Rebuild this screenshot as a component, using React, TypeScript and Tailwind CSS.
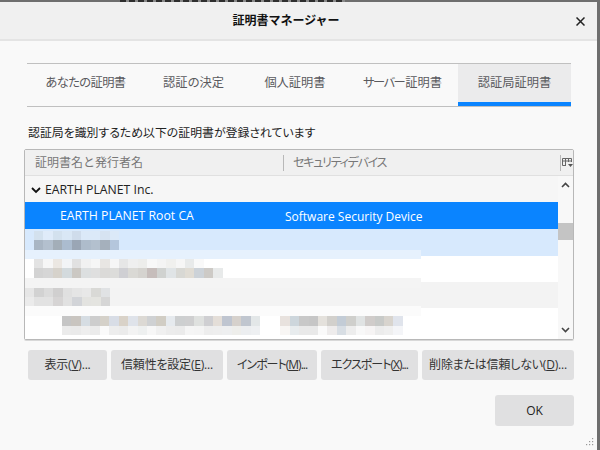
import React from "react";

const JP = "font-['Open_Sans','Noto_Sans_CJK_JP',sans-serif]";

type StripDef = { h: number; ml: number; w?: number; band?: string; cells?: string[] };

const strips: StripDef[] = [
  { h: 55, ml: 0 },
  {
    h: 9, ml: 9,
    cells: ["#d3e1ee", "#dfebf9", "#d3e1ee", "#d9e7f5", "#cfdceb", "#dbe9f8", "#dbe9f8", "#d6e3f1", "#dbe9f8"],
  },
  {
    h: 10, ml: 9,
    cells: ["#a9b6c4", "#b3c0ce", "#a3aeb8", "#abbccf", "#9aa6b5", "#aebccb", "#b3c0ce", "#a5b0bc", "#b4c6dc"],
  },
  { h: 9, ml: 0, w: 396, band: "#e6f1fd" },
  {
    h: 9, ml: 9,
    cells: ["#e3e3e3", "#f6f6f6", "#ebe7e2", "#f2f4f6", "#e1e1e1", "#f1f1f1", "#f6f6f6", "#e8e6e3", "#f6f6f6", "#e6e6e6", "#efefef", "#ededeb", "#f8f8f8", "#f4f4f4", "#f0f0ee", "#f6f6f6", "#e8eaea", "#f9f9f9"],
  },
  {
    h: 10, ml: 9,
    cells: ["#d3d3d3", "#d6d6d6", "#d6d2cb", "#d3dadd", "#cbc8c3", "#dcdfe0", "#dfdfdf", "#dbdad8", "#dcdcda", "#cfcfd3", "#dad9d5", "#d5d3cf", "#c6bdbb", "#d0d2d0", "#e0e4e6", "#d8d8d4", "#e0dcd4", "#ccd2d8", "#cdcac6", "#e8eaea"],
  },
  { h: 10, ml: 0, w: 396, band: "#f4f4f4" },
  {
    h: 9, ml: 0,
    cells: ["#e6e6e6", "#d2d2d2", "#dbdbdb", "#d0cfcf", "#e0e0e0", "#e5e5e5", "#e8e8e8", "#d9d9d6", "#e0e2e4"],
  },
  {
    h: 9, ml: 0,
    cells: ["#ebebeb", "#e2e2e2", "#e2e2e2", "#d6d4d4", "#e1e1e1", "#d2d4d8", "#e3e3e0", "#e4e4e0", "#d6d6d6"],
  },
  { h: 10, ml: 0, w: 396, band: "#fbfbfb" },
];

const lowA = ["#c5c5c5", "#c9c5c0", "#d6dde3", "#cdcdcd", "#d5d1c9", "#d8dde6", "#d9d2c8", "#dfe3ea", "#dcd9d4", "#cfd1d3", "#d1cdc4", "#e6eaee", "#cdcfd0", "#cfcfd0", "#dfe1df", "#cfcfd2", "#e4ded8", "#bfc5d0", "#d6d1cc", "#c0c6cf", "#e3e7e8"];
const lowA2 = ["#e8e2de", "#cdd6dc", "#c8c8c8", "#c6c6c6", "#e4e1dc", "#d2d0cc", "#c3ccd6", "#cfcfcc", "#e0e3e3", "#d0ccca", "#c8cac8", "#d8d4ce", "#e0e4ec"];
const lowB = ["#ebebeb", "#eaeaea", "#eeeeee", "#ebebeb", "#fafafa", "#ededed", "#ebebeb", "#f3f3f3", "#eef0f0", "#f7f7f7", "#f0f0f0", "#ececec", "#ebebeb", "#f5f5f5", "#f4f4f4", "#ededed", "#eeeeee", "#eeeff0", "#eeeeeb", "#eceef0", "#eef0f2"];
const lowB2 = ["#f8f6f4", "#e8ecee", "#e9e9e9", "#e9e9e9", "#fafafa", "#eeecec", "#d8dee4", "#ededed", "#f8f8f8", "#f6f4f4", "#ececec", "#efefef", "#f4f5f8"];

function Cells({ colors }: { colors: string[] }) {
  return (
    <>
      {colors.map((c, i) => (
        <div key={i} className="h-full w-[9.45px] shrink-0" style={{ backgroundColor: c }} />
      ))}
    </>
  );
}

function Mosaic() {
  return (
    <div className="pointer-events-none absolute inset-0 flex flex-col overflow-hidden">
      {strips.map((s, i) => (
        <div key={i} className="flex shrink-0" style={{ height: s.h, marginLeft: s.ml }}>
          {s.cells && <Cells colors={s.cells} />}
          {s.band && <div className="h-full" style={{ width: s.w, backgroundColor: s.band }} />}
        </div>
      ))}
      <div className="ml-[37px] flex h-[10px] shrink-0">
        <Cells colors={lowA} />
        <div className="w-[20px] shrink-0" />
        <Cells colors={lowA2} />
      </div>
      <div className="ml-[37px] flex h-[9px] shrink-0">
        <Cells colors={lowB} />
        <div className="w-[20px] shrink-0" />
        <Cells colors={lowB2} />
      </div>
    </div>
  );
}

function Btn({ label, k, w, kana }: { label: string; k: string; w: string; kana?: boolean }) {
  return (
    <button className={`h-[30px] ${w} shrink-0 rounded-[3px] bg-[#e0e0e1] text-[12px] text-[#333] whitespace-nowrap [font-feature-settings:'palt'] ${kana ? "tracking-[-1px]" : "tracking-[-0.2px]"}`}>
      {label}(<span className="underline">{k}</span>)...
    </button>
  );
}

function Tab({ label, rest, w, active, tight }: { label?: string; rest: string; w: string; active?: boolean; tight?: boolean }) {
  return (
    <div
      className={`flex ${w} items-center justify-center text-[12.25px] text-[#5a5a5e] [font-feature-settings:'palt'] ${
        active ? "border-b-[4px] border-[#0a84ff] bg-[#ebebec] pt-[1px]" : "pb-[3px]"
      } ${tight ? "tracking-[-0.6px]" : ""}`}
    >
      {label && <span className="tracking-[-1.5px] pr-[1px]">{label}</span>}
      {rest}
    </div>
  );
}

export default function App() {
  return (
    <div className={`h-[450px] w-[600px] overflow-hidden bg-[#6e6e6e] pr-[3px] ${JP}`}>
      <div className="flex h-[2px]">
        <div className="ml-[120px] h-full w-[225px] bg-[repeating-linear-gradient(90deg,#2e2e2e_0,#2e2e2e_6px,#8a8a8a_6px,#8a8a8a_9px)]" />
      </div>
      <div className="relative flex h-[448px] w-[597px] flex-col rounded-t-[3px] bg-[#f9f9f9]">
        {/* Title bar */}
        <div className="relative flex h-[39px] shrink-0 items-center justify-center border-b-2 border-[#e4e4e4] bg-[#f0f0f0] pr-[25px]">
          <span className="text-[12px] font-bold text-[#111]">証明書マネージャー</span>
          <svg className="absolute right-[12px] top-[15px] h-[9px] w-[9px]" viewBox="0 0 9 9" fill="none" stroke="#222" strokeWidth="1.5">
            <path d="M0.5 0.5 L8.5 8.5 M8.5 0.5 L0.5 8.5" />
          </svg>
        </div>

        <div className="flex flex-1 flex-col pl-[24px] pr-[23px]">
          {/* Tabs */}
          <div className="ml-[3px] mr-[3px] mt-[22px] flex h-[44px] border-y-[1.5px] border-[#c0c0c0]">
            <Tab rest="あなたの証明書" w="w-[117px]" tight />
            <Tab rest="認証の決定" w="w-[99px]" />
            <Tab rest="個人証明書" w="w-[104px]" />
            <Tab label="サーバー" rest="証明書" w="w-[111px]" />
            <Tab rest="認証局証明書" w="w-[113px]" active />
          </div>

          <div className="ml-[4px] mt-[17px] h-[16px] text-[11.9px] leading-[16px] text-[#222] [font-feature-settings:'palt']">
            認証局を識別するため以下の証明書が登録されています
          </div>

          {/* Tree */}
          <div className="mt-[9px] flex h-[191px] w-[550px] flex-col rounded-[2px] border border-[#b8b8b8] shadow-[0_1px_0_#d8d8d8]">
            <div className="relative flex h-[26px] shrink-0 items-center border-b border-[#e0e0e0] bg-[#f0f0f0] pt-[1px] text-[12px] text-[#777]">
              <span className="w-[258px] pl-[10px]">証明書名と発行者名</span>
              <span className="h-[16px] border-l border-[#b8b8b8] pl-[9px] leading-[16px] tracking-[-1.25px] [font-feature-settings:'palt']">セキュリティデバイス</span>
              <span className="ml-auto mr-[12px] h-[16px] border-l border-[#b8b8b8]" />
              <svg className="absolute right-0 top-[7px] h-[11px] w-[11px]" viewBox="0 0 11 11" fill="none" stroke="#666" strokeWidth="1">
                <path d="M0.5 1.5 H9.5 M0.5 1.5 V8.5 H4 M9.5 1.5 V5 M3.5 1.5 V8 M6.5 1.5 V5 M0.5 4 H9.5" />
                <path d="M6 7 H11 L8.5 10 Z" fill="#555" stroke="none" />
              </svg>
            </div>
            <div className="flex min-h-0 flex-1 bg-white">
              <div className="relative w-[534px] text-[12.25px]">
                <div className="flex h-[26px] items-center bg-[#f6f6f6] pt-[2px] text-[#222]">
                  <svg className="ml-[6px] mr-[4px] h-[7px] w-[10px]" viewBox="0 0 10 7" fill="none" stroke="#111" strokeWidth="1.8">
                    <path d="M1 1 L5 5 L9 1" />
                  </svg>
                  EARTH PLANET Inc.
                </div>
                <div className="flex h-[27px] items-center bg-[#0a84ff] pt-[2px] text-white">
                  <span className="w-[260px] pl-[35px]">EARTH PLANET Root CA</span>
                  <span className="text-[12px]">Software Security Device</span>
                </div>
                <div className="h-[27px] bg-[#d7e9fd]" />
                <div className="h-[26px] bg-white" />
                <div className="h-[26px] bg-[#f3f3f3]" />
                <div className="h-[27px] bg-white" />
                <Mosaic />
              </div>
              <div className="flex w-[15px] flex-col items-center bg-[#f8f8f8]">
                <svg className="mt-[6px] h-[6px] w-[9px]" viewBox="0 0 9 6" fill="none" stroke="#444" strokeWidth="1.6">
                  <path d="M1 5 L4.5 1.5 L8 5" />
                </svg>
                <div className="mt-[35px] h-[17px] w-full bg-[#c4c4c4]" />
                <svg className="mb-[6px] mt-auto h-[6px] w-[9px]" viewBox="0 0 9 6" fill="none" stroke="#444" strokeWidth="1.6">
                  <path d="M1 1 L4.5 4.5 L8 1" />
                </svg>
              </div>
            </div>
          </div>

          {/* Actions */}
          <div className="ml-[4px] mt-[10px] flex gap-[4px]">
            <Btn label="表示" k="V" w="w-[79px]" />
            <Btn label="信頼性を設定" k="E" w="w-[112px]" />
            <Btn label="インポート" k="M" w="w-[90px]" kana />
            <Btn label="エクスポート" k="X" w="w-[97px]" kana />
            <Btn label="削除または信頼しない" k="D" w="w-[152px]" />
          </div>

          <div className="mt-[15px] flex justify-end">
            <button className="h-[31px] w-[79px] rounded-[3px] bg-[#e0e0e1] text-[12px] text-[#222]">OK</button>
          </div>
        </div>

        {/* Resize grip */}
        <svg className="absolute bottom-[3px] right-[2px] h-[9px] w-[9px]" viewBox="0 0 9 9" fill="#999">
          <rect x="6" y="0" width="1.2" height="1.2" />
          <rect x="3" y="3" width="1.2" height="1.2" />
          <rect x="6" y="3" width="1.2" height="1.2" />
          <rect x="0" y="6" width="1.2" height="1.2" />
          <rect x="3" y="6" width="1.2" height="1.2" />
          <rect x="6" y="6" width="1.2" height="1.2" />
        </svg>
      </div>
    </div>
  );
}
